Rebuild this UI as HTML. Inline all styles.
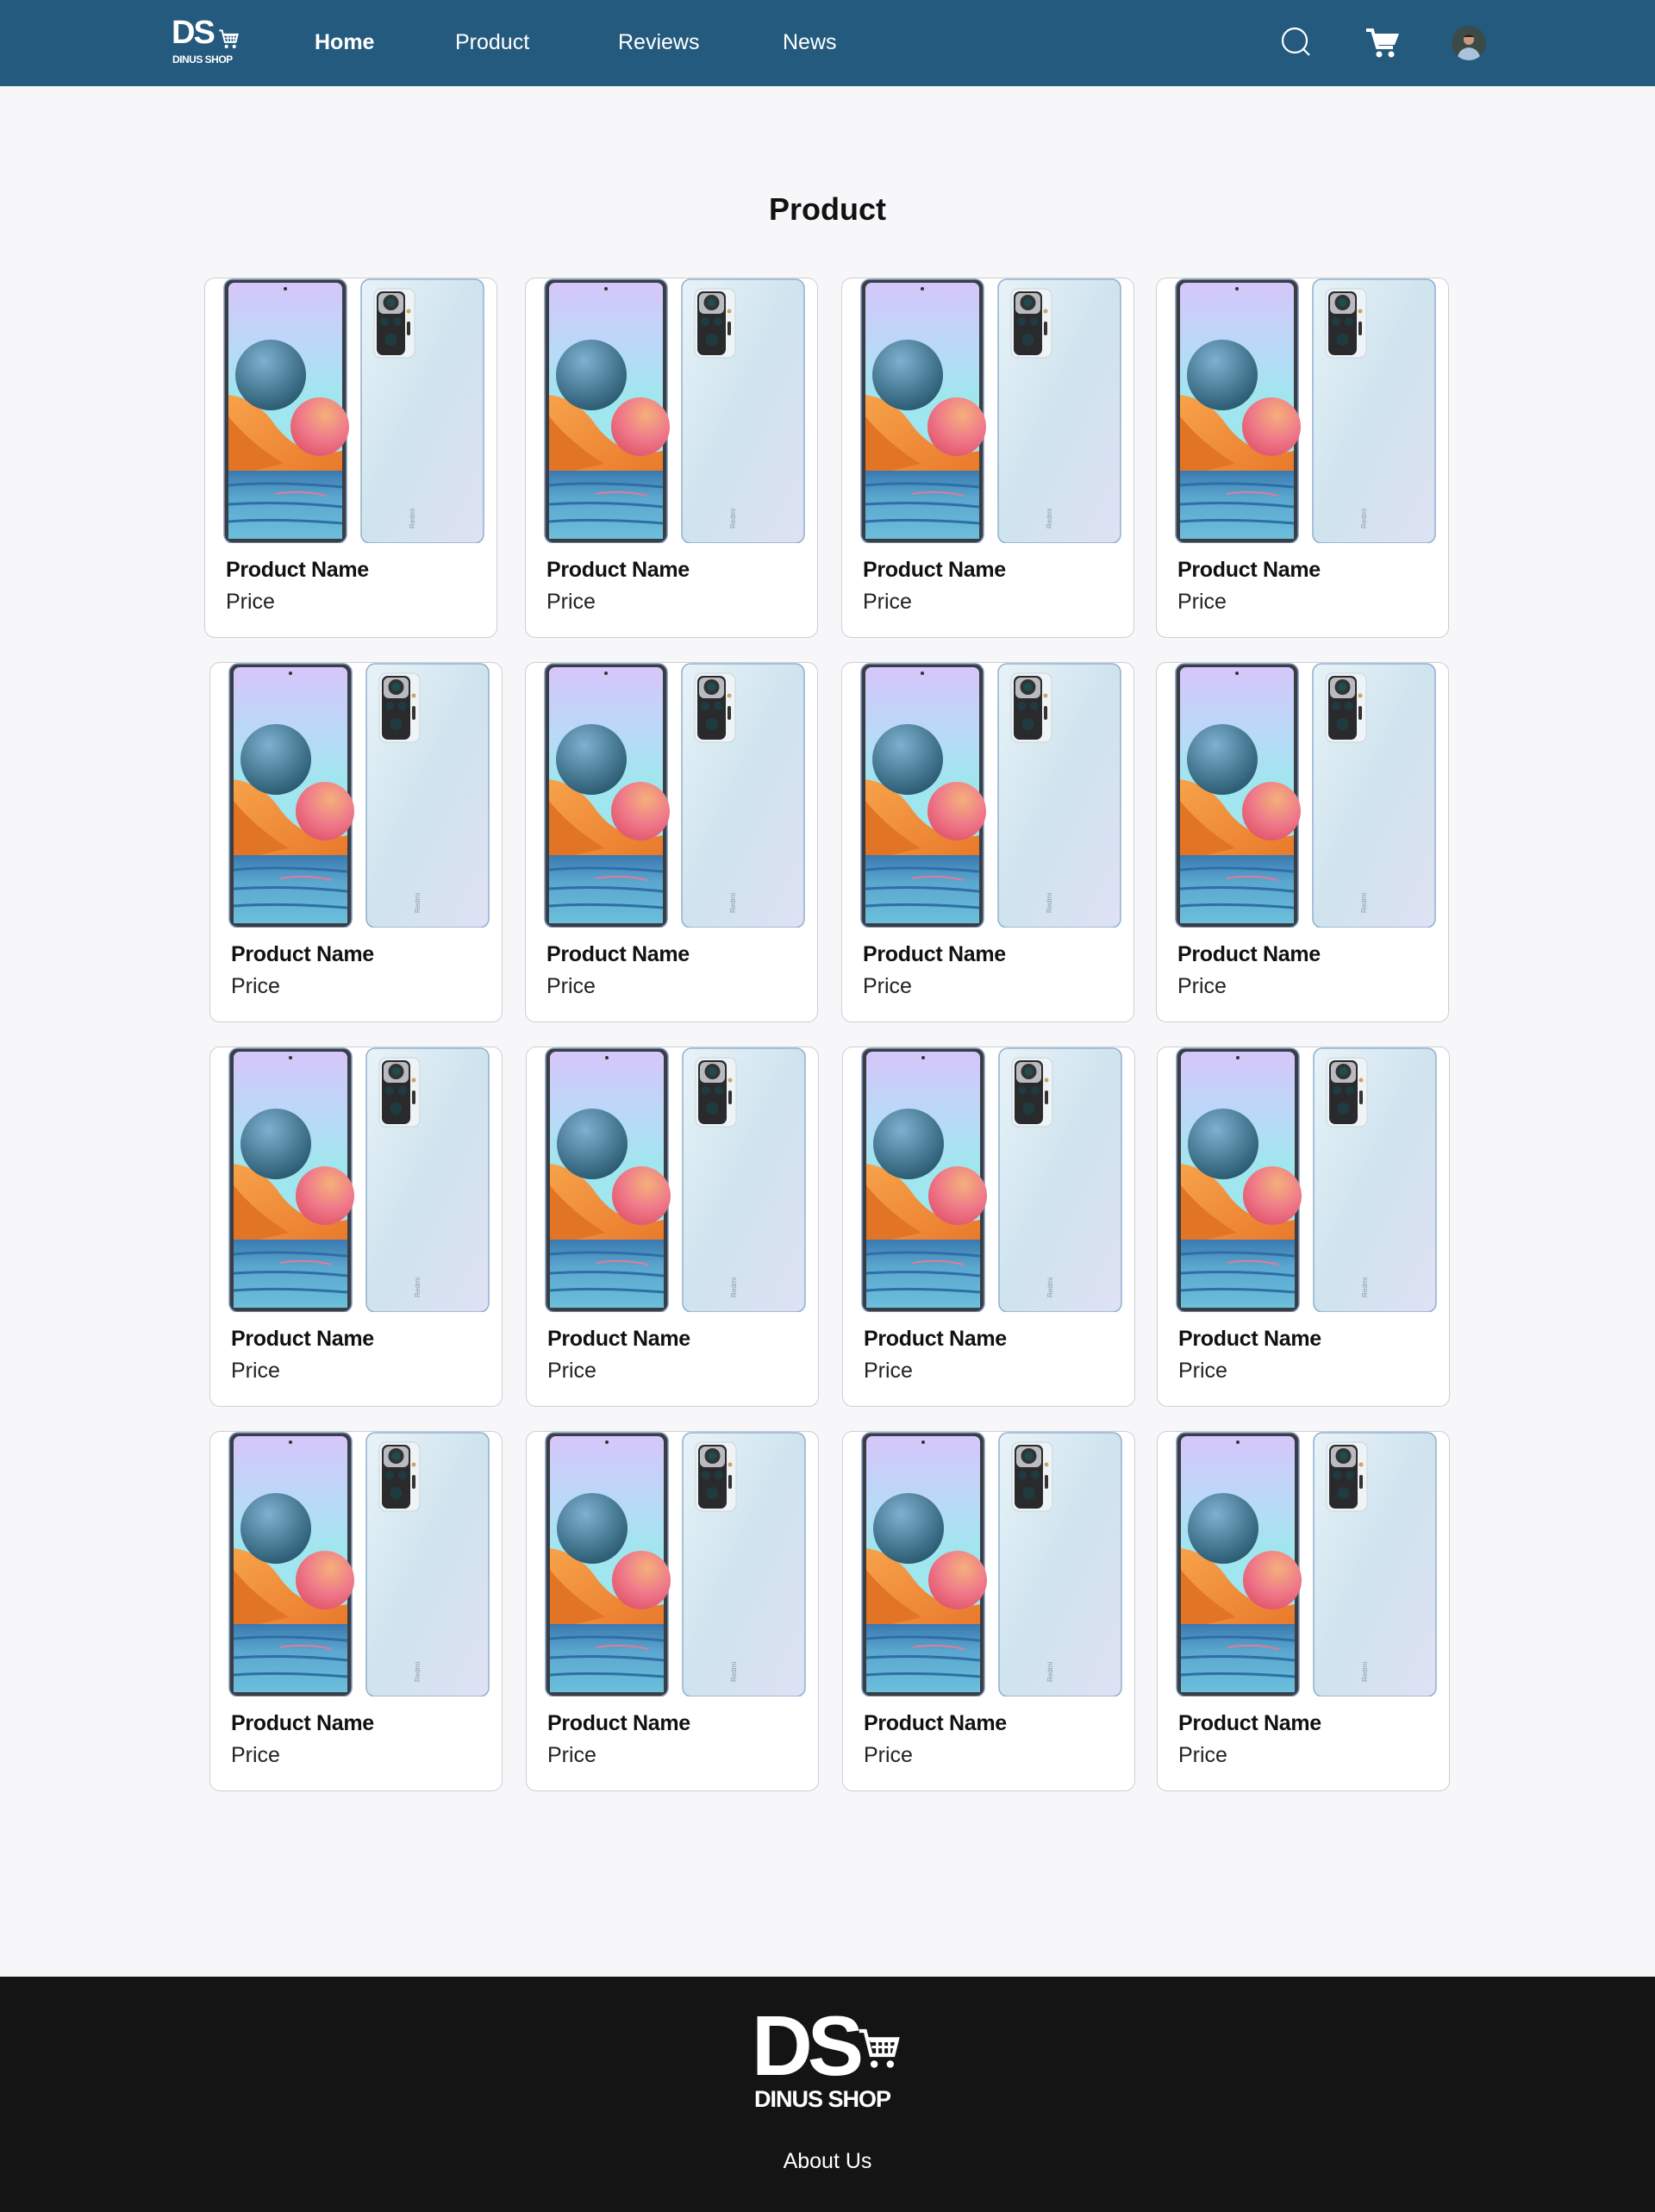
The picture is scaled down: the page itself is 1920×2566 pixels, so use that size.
<!DOCTYPE html>
<html><head><meta charset="utf-8">
<style>
*{margin:0;padding:0;box-sizing:border-box}
body{width:1920px;height:2566px;background:#f7f7f9;font-family:"Liberation Sans",sans-serif;position:relative;overflow:hidden}
.hdr{position:absolute;left:0;top:0;width:1920px;height:100px;background:#235a7e}
.nav{position:absolute;top:34px;color:#fff;font-size:25px;line-height:30px}
.card{position:absolute;width:340px;height:418px;background:#fff;border:1.5px solid #cfcfd3;border-radius:12px}
.card svg{position:absolute;left:21px;top:0}
.card .n{position:absolute;left:24px;top:324px;font-size:25px;font-weight:bold;color:#111;letter-spacing:-0.3px}
.card .p{position:absolute;left:24px;top:361px;font-size:25px;color:#222}
.ftr{position:absolute;left:0;top:2293px;width:1920px;height:273px;background:#141414}
</style></head><body>
<svg width="0" height="0" style="position:absolute">
<defs>
<linearGradient id="scr" x1="0" y1="0" x2="0" y2="1">
<stop offset="0" stop-color="#d6c6fb"/><stop offset="0.3" stop-color="#b4dcf6"/><stop offset="0.45" stop-color="#9fe6ee"/></linearGradient>
<linearGradient id="org" x1="0" y1="0" x2="1" y2="1"><stop offset="0" stop-color="#f7a24a"/><stop offset="1" stop-color="#e8782a"/></linearGradient>
<linearGradient id="wat" x1="0" y1="0" x2="0" y2="1"><stop offset="0" stop-color="#3a79b0"/><stop offset="0.4" stop-color="#5aa7cf"/><stop offset="1" stop-color="#6cbfdc"/></linearGradient>
<radialGradient id="sph1" cx="0.4" cy="0.3" r="0.7"><stop offset="0" stop-color="#7fb0d0"/><stop offset="1" stop-color="#2c5d74"/></radialGradient>
<radialGradient id="sph2" cx="0.6" cy="0.3" r="0.7"><stop offset="0" stop-color="#f5b07a"/><stop offset="0.6" stop-color="#ef7a8a"/><stop offset="1" stop-color="#e45a70"/></radialGradient>
<linearGradient id="bk" x1="0" y1="0" x2="1" y2="1"><stop offset="0" stop-color="#e8f3f8"/><stop offset="0.5" stop-color="#cfe3ee"/><stop offset="1" stop-color="#dfe2f4"/></linearGradient>
<symbol id="ph" viewBox="0 0 303 307">
<rect x="1" y="1" width="142" height="306" rx="10" fill="#3a3d42" stroke="#7d9ac0" stroke-width="1.5"/>
<rect x="6" y="5" width="132" height="297" rx="7" fill="url(#scr)"/>
<circle cx="72" cy="12" r="2" fill="#333"/>
<path d="M6 135 Q40 140 60 170 Q90 210 138 200 L138 230 L6 230Z" fill="url(#org)"/>
<path d="M6 160 Q30 190 70 215 L6 230Z" fill="#e27426"/>
<rect x="6" y="223" width="132" height="79" fill="url(#wat)"/>
<path d="M6 240 Q60 235 138 242 M6 262 Q70 258 138 265 M6 282 Q60 278 138 284" stroke="#2f6ea6" stroke-width="3" fill="none"/>
<path d="M60 250 Q90 245 120 252" stroke="#e47a9a" stroke-width="2" fill="none"/>
<circle cx="55" cy="112" r="41" fill="url(#sph1)"/>
<circle cx="112" cy="172" r="34" fill="url(#sph2)"/>
<rect x="160" y="1" width="142" height="306" rx="10" fill="url(#bk)" stroke="#8fb0d0" stroke-width="1.5"/>
<rect x="175" y="12" width="47" height="80" rx="8" fill="#eef3f6" stroke="#c8d4de"/>
<rect x="178" y="15" width="33" height="74" rx="7" fill="#2a2a2d"/>
<rect x="180" y="17" width="29" height="24" rx="6" fill="#b8bbc0"/>
<circle cx="194.5" cy="28" r="9" fill="#333"/><circle cx="194.5" cy="28" r="5" fill="#1e4c50"/>
<circle cx="187" cy="50" r="5" fill="#1e3c40"/><circle cx="202" cy="50" r="5" fill="#1e3c40"/>
<circle cx="194.5" cy="71" r="7" fill="#1e3c40"/>
<circle cx="215" cy="38" r="2.5" fill="#c9a46a"/><rect x="213" y="50" width="4" height="16" rx="2" fill="#333"/>
<text x="0" y="0" transform="translate(222,290) rotate(-90)" font-size="8" fill="#8a9aa8" font-family="Liberation Sans">Redmi</text>
</symbol>
<symbol id="cart" viewBox="0 0 24 24"><path d="M2 3h3l3 12h11l2-8H6.5" fill="none" stroke="#fff" stroke-width="1.8"/><path d="M7.5 8h13M8.3 11h11.5M11 7v8M14 7v8M17 7v8" stroke="#fff" stroke-width="1.3"/><circle cx="9.5" cy="19.5" r="1.8" fill="#fff"/><circle cx="17.5" cy="19.5" r="1.8" fill="#fff"/></symbol>
</defs></svg>

<div class="hdr">
 <div style="position:absolute;left:199px;top:18px;color:#fff;font-weight:bold;font-size:38px;letter-spacing:-2px;line-height:40px">DS</div>
 <svg style="position:absolute;left:252px;top:32px" width="27" height="27"><use href="#cart"/></svg>
 <div style="position:absolute;left:200px;top:62px;color:#fff;font-weight:bold;font-size:12px;letter-spacing:-0.5px">DINUS SHOP</div>
 <div class="nav" style="left:365px;font-weight:bold">Home</div>
 <div class="nav" style="left:528px">Product</div>
 <div class="nav" style="left:717px">Reviews</div>
 <div class="nav" style="left:908px">News</div>
 <svg style="position:absolute;left:1485px;top:30px" width="40" height="40"><circle cx="17" cy="17" r="14" fill="none" stroke="#fff" stroke-width="2.2"/><path d="M27 27l7 7" stroke="#fff" stroke-width="2.2"/></svg>
 <svg style="position:absolute;left:1584px;top:32px" width="40" height="36" viewBox="0 0 40 36"><path d="M1 3h7l6 20h18" fill="none" stroke="#fff" stroke-width="4"/><path d="M9 7h30l-5 13H13z" fill="#fff"/><circle cx="16" cy="31" r="3.5" fill="#fff"/><circle cx="30" cy="31" r="3.5" fill="#fff"/></svg>
 <svg style="position:absolute;left:1684px;top:30px" width="40" height="40"><defs><clipPath id="av"><circle cx="20" cy="20" r="20"/></clipPath></defs><g clip-path="url(#av)"><rect width="40" height="40" fill="#3c4a48"/><path d="M6 40 Q8 26 20 25 Q32 26 34 40Z" fill="#a9c3dc"/><circle cx="20" cy="16" r="6" fill="#c99a80"/><path d="M14 13 Q20 7 26 13" fill="#2a201a"/></g></svg>
</div>

<div style="position:absolute;left:0;width:1920px;top:222px;text-align:center;font-size:36px;font-weight:bold;color:#111">Product</div>

<div class="card" style="left:237px;top:322px"><svg width="303" height="307"><use href="#ph"/></svg><div class="n">Product Name</div><div class="p">Price</div></div>
<div class="card" style="left:609px;top:322px"><svg width="303" height="307"><use href="#ph"/></svg><div class="n">Product Name</div><div class="p">Price</div></div>
<div class="card" style="left:976px;top:322px"><svg width="303" height="307"><use href="#ph"/></svg><div class="n">Product Name</div><div class="p">Price</div></div>
<div class="card" style="left:1341px;top:322px"><svg width="303" height="307"><use href="#ph"/></svg><div class="n">Product Name</div><div class="p">Price</div></div>

<div class="card" style="left:243px;top:768px"><svg width="303" height="307"><use href="#ph"/></svg><div class="n">Product Name</div><div class="p">Price</div></div>
<div class="card" style="left:609px;top:768px"><svg width="303" height="307"><use href="#ph"/></svg><div class="n">Product Name</div><div class="p">Price</div></div>
<div class="card" style="left:976px;top:768px"><svg width="303" height="307"><use href="#ph"/></svg><div class="n">Product Name</div><div class="p">Price</div></div>
<div class="card" style="left:1341px;top:768px"><svg width="303" height="307"><use href="#ph"/></svg><div class="n">Product Name</div><div class="p">Price</div></div>

<div class="card" style="left:243px;top:1214px"><svg width="303" height="307"><use href="#ph"/></svg><div class="n">Product Name</div><div class="p">Price</div></div>
<div class="card" style="left:610px;top:1214px"><svg width="303" height="307"><use href="#ph"/></svg><div class="n">Product Name</div><div class="p">Price</div></div>
<div class="card" style="left:977px;top:1214px"><svg width="303" height="307"><use href="#ph"/></svg><div class="n">Product Name</div><div class="p">Price</div></div>
<div class="card" style="left:1342px;top:1214px"><svg width="303" height="307"><use href="#ph"/></svg><div class="n">Product Name</div><div class="p">Price</div></div>

<div class="card" style="left:243px;top:1660px"><svg width="303" height="307"><use href="#ph"/></svg><div class="n">Product Name</div><div class="p">Price</div></div>
<div class="card" style="left:610px;top:1660px"><svg width="303" height="307"><use href="#ph"/></svg><div class="n">Product Name</div><div class="p">Price</div></div>
<div class="card" style="left:977px;top:1660px"><svg width="303" height="307"><use href="#ph"/></svg><div class="n">Product Name</div><div class="p">Price</div></div>
<div class="card" style="left:1342px;top:1660px"><svg width="303" height="307"><use href="#ph"/></svg><div class="n">Product Name</div><div class="p">Price</div></div>

<div class="ftr">
 <div style="position:absolute;left:872px;top:30px;color:#fff;font-weight:bold;font-size:98px;letter-spacing:-6px;line-height:100px">DS</div>
 <svg style="position:absolute;left:992px;top:56px" width="56" height="56"><use href="#cart"/></svg>
 <div style="position:absolute;left:875px;top:127px;color:#fff;font-weight:bold;font-size:27px;letter-spacing:-1px">DINUS SHOP</div>
 <div style="position:absolute;left:0;width:1920px;top:200px;text-align:center;color:#fff;font-size:25px">About Us</div>
</div>
</body></html>
